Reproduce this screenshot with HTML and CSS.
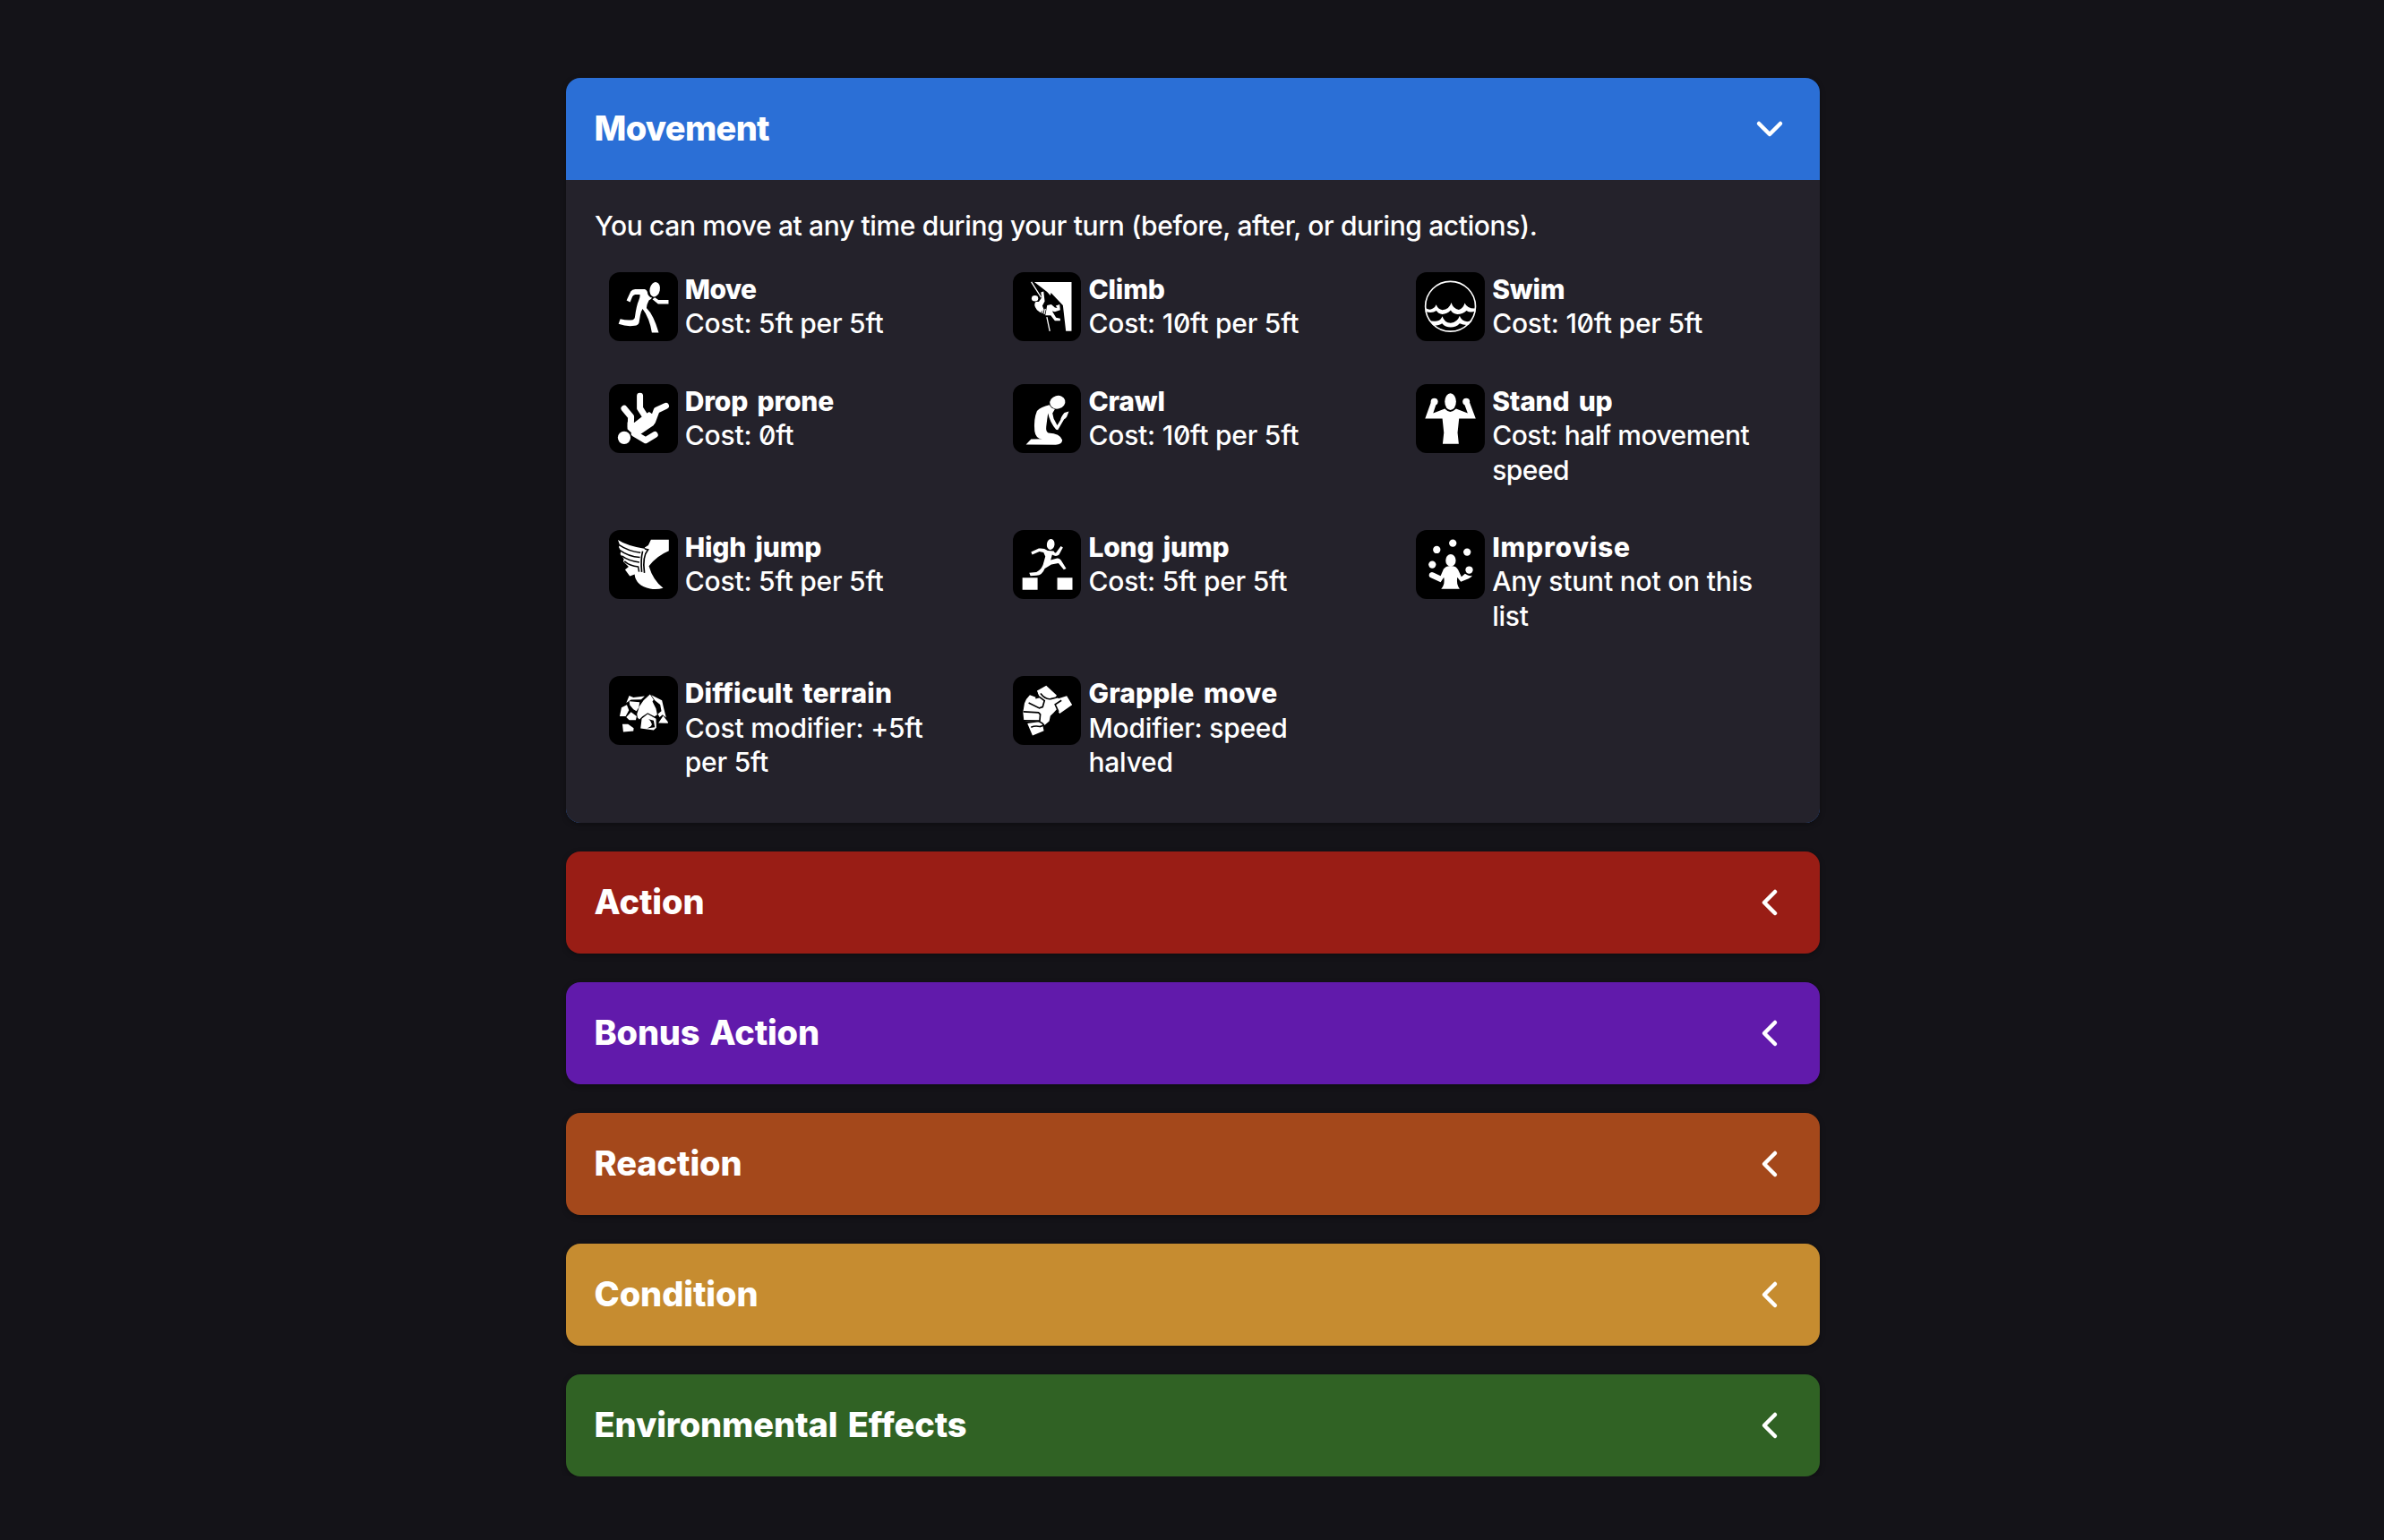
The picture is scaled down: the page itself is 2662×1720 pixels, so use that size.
FILE: index.html
```html
<!DOCTYPE html>
<html lang="en">
<head>
<meta charset="utf-8">
<title>Quick Reference</title>
<link rel="stylesheet" href="styles.css">
</head>
<body>
<main class="sections">
  <section class="card movement">
    <header class="card-head"><h2>Movement</h2><svg class="chevron" viewBox="0 0 32 32"><path d="M4 10 16 22 28 10"/></svg></header>
    <div class="panel">
      <p class="intro">You can move at any time during your turn (before, after, or during actions).</p>
      <div class="grid">
        <article class="item">
          <svg class="icon" viewBox="30 27 231 231"><ellipse cx="184" cy="85" rx="17" ry="25" transform="rotate(12 184 85)"/><path d="M89 122 103 92Q108 84 118 84L150 84Q160 88 160 100 165 112 175 113 172 118 164 122 157 135 156 147 180 170 197 230L174 230Q166 180 143 150 136 160 135 172L131 196Q128 206 116 207 90 211 62 201L68 184Q90 190 110 187 116 186 117 178 122 140 130 122 135 108 134 102L118 102Q112 103 109 108L101 128ZM184 112 196 120H230V134H195L176 118Z"/></svg>
          <div class="text"><h3 class="tight">Move</h3><p>Cost: 5ft per 5ft</p></div>
        </article>
        <article class="item">
          <svg class="icon" viewBox="31 27 231 231"><path d="M103 60H228V225H209L199 138 159 96 157 105 146 93ZM108 126Q98 136 112 154L124 163 134 150 130 140 138 125 134 92 125 95 128 112 118 126ZM146 138 160 135 172 146 180 147 175 140 188 135 190 154 172 160 163 158 176 180 190 183V190L172 190 158 172 140 172Z"/><ellipse cx="105" cy="115" rx="11" ry="10"/><path class="line" stroke-width="4" d="M93 60 126 112M134 151 129 165M140 150 136 168M145 178 155 225"/></svg>
          <div class="text"><h3>Climb</h3><p>Cost: 10ft per 5ft</p></div>
        </article>
        <article class="item">
          <svg class="icon" viewBox="33 27 231 231"><circle class="line" cx="149" cy="142" r="84" stroke-width="5"/><path d="M66 148Q80 156 90 149 98 145 101 136 108 152 122 154 145 152 152 129 158 150 177 153 192 150 197 131 206 150 232 149V158Q215 165 203 156 190 168 172 168 158 168 150 155 137 168 122 168 108 166 102 156 88 166 68 160ZM76 188Q88 194 104 191 116 190 122 175 128 196 150 198 172 196 180 174 186 192 205 193L222 190 210 204Q195 206 180 199 168 212 150 212 132 212 121 199 112 206 92 206Z"/></svg>
          <div class="text"><h3>Swim</h3><p>Cost: 10ft per 5ft</p></div>
        </article>
        <article class="item">
          <svg class="icon" viewBox="30 402 231 231"><circle cx="81" cy="582" r="21.500"/><path d="M92 530 115 531 145 508 165 495 189 512 180 540 130 574 112 572 92 553Z"/><path class="line round" stroke-width="21" d="M134 442V483L155 515M221 475 190 490 176 528M81 484 104 512 103 545M115 568 153 591 184 572"/></svg>
          <div class="text"><h3>Drop prone</h3><p>Cost: 0ft</p></div>
        </article>
        <article class="item">
          <svg class="icon" viewBox="31 402 231 231"><ellipse cx="181" cy="463" rx="26" ry="22" transform="rotate(-15 181 463)"/><path d="M154 472Q160 484 172 486L164 500 168 518 180 540 191 522Q192 512 204 498L219 494 212 512Q208 518 203 520L182 556 176 555Q155 530 149 500 146 520 143 545 141 562 150 566 190 568 197 590 196 604 175 606L75 605 92 587 132 586Q108 588 104 560 100 520 112 492 125 478 154 472Z"/></svg>
          <div class="text"><h3>Crawl</h3><p>Cost: 10ft per 5ft</p></div>
        </article>
        <article class="item">
          <svg class="icon" viewBox="33 402 231 231"><ellipse cx="149" cy="461" rx="19" ry="28.500"/><circle cx="95" cy="461" r="12"/><circle cx="202" cy="461" r="12"/><path d="M64 518 84 462 101 470 91 500 130 485Q148 505 168 485L207 500 196 470 213 462 234 518H178L173 565 177 603H123L127 565 122 518Z"/></svg>
          <div class="text"><h3>Stand up</h3><p class="tight">Cost: half movement speed</p></div>
        </article>
        <article class="item">
          <svg class="icon" viewBox="30 21 231 231"><path d="M171 53H231V91Q190 108 164 142 178 190 212 216 190 222 168 218 120 208 116 170L100 176 84 154 96 144 78 126 80 118 68 102 70 92 63 78 66 70 60 54Q90 74 152 84L150 80 162 72Z"/><path class="cut" stroke-width="4.500" d="M64 71Q95 92 136 97M67 89Q95 110 134 113M73 108Q98 126 132 129M82 126Q100 142 128 144L131 161"/><path class="cut" stroke-width="5" d="M150 84 161 87Q141 110 149 165M143 92Q136 120 140 162"/></svg>
          <div class="text"><h3>High jump</h3><p>Cost: 5ft per 5ft</p></div>
        </article>
        <article class="item">
          <svg class="icon" viewBox="31 21 231 231"><path d="M63 181H114V222H63ZM180 181H231V222H180ZM92 95 118 83Q135 81 148 90L168 92Q172 100 176 97L192 75 199 80 186 104Q176 112 163 104L158 122 180 116Q190 116 196 128L210 150 202 154 184 132 160 137Q148 145 138 150 130 172 110 174L90 175 86 165 110 162Q125 155 132 138L140 110 134 96 120 93 96 104Z"/><ellipse cx="158" cy="69" rx="13" ry="18" transform="rotate(8 158 69)"/></svg>
          <div class="text"><h3>Long jump</h3><p>Cost: 5ft per 5ft</p></div>
        </article>
        <article class="item">
          <svg class="icon" viewBox="33 21 231 231"><circle cx="157" cy="65" r="12.500"/><circle cx="103" cy="87" r="12.500"/><circle cx="205" cy="95" r="12.500"/><circle cx="88" cy="137" r="12.500"/><circle cx="212" cy="155" r="12.500"/><ellipse cx="150" cy="123" rx="17" ry="21"/><path d="M78 168Q84 160 92 164L116 175 126 152Q135 140 150 142 168 140 175 155L186 178 198 168Q212 178 222 174 221 180 210 184L184 195 172 180Q168 203 180 219H118Q132 203 127 180L116 196 80 180Q75 175 78 168Z"/></svg>
          <div class="text"><h3 class="wide">Improvise</h3><p>Any stunt not on this list</p></div>
        </article>
        <article class="item">
          <svg class="icon" viewBox="30 510 231 231"><path d="M88 600 98 576 112 582 150 578 138 589 104 590ZM98 595 133 598 130 616 122 628 112 622 100 608ZM124 638 132 612 146 592 168 572 180 590 176 596 188 620 192 640 183 646 160 634 142 646 132 656 126 650ZM172 574 208 592 214 618 222 650 210 640 200 648 194 638 206 628 202 606 184 592ZM66 645 72 616 90 607 97 625 86 645ZM88 648 104 631 123 645 120 658 98 658ZM136 686 140 654 160 638 188 654 189 684 180 692ZM196 668 212 644 228 664V669ZM78 698 75 672 94 672 113 685 112 695Z"/><path class="hole" d="M163 655 180 660 184 682 158 686Q174 680 174 672 172 660 163 655Z"/></svg>
          <div class="text"><h3 class="mid">Difficult terrain</h3><p>Cost modifier: +5ft per 5ft</p></div>
        </article>
        <article class="item">
          <svg class="icon" viewBox="31 30 231 231"><path d="M112 80 143 62 178 95 174 103 186 105 212 97 230 127 188 156 178 142 168 153 157 164 153 182 138 195 130 190 135 214 97 230 80 190 82 184 68 180 65 152 70 122 76 108 88 94 110 102 118 100Z"/><path class="cut" stroke-width="5" d="M110 83 118 101 107 104M124 89Q140 110 158 107L178 102M118 99 137 113 131 134 120 138 84 120M66 150 117 153 123 159 121 181 66 180M78 187 118 182 130 189 135 195M92 202Q106 196 122 200L133 196M194 112 173 126 184 150"/></svg>
          <div class="text"><h3 class="mid">Grapple move</h3><p>Modifier: speed halved</p></div>
        </article>
      </div>
    </div>
  </section>
  <section class="card action"><header class="card-head"><h2>Action</h2><svg class="chevron" viewBox="0 0 32 32"><path d="M22 4 10 16 22 28"/></svg></header></section>
  <section class="card bonus"><header class="card-head"><h2>Bonus Action</h2><svg class="chevron" viewBox="0 0 32 32"><path d="M22 4 10 16 22 28"/></svg></header></section>
  <section class="card reaction"><header class="card-head"><h2>Reaction</h2><svg class="chevron" viewBox="0 0 32 32"><path d="M22 4 10 16 22 28"/></svg></header></section>
  <section class="card condition"><header class="card-head"><h2>Condition</h2><svg class="chevron" viewBox="0 0 32 32"><path d="M22 4 10 16 22 28"/></svg></header></section>
  <section class="card environment"><header class="card-head"><h2>Environmental Effects</h2><svg class="chevron" viewBox="0 0 32 32"><path d="M22 4 10 16 22 28"/></svg></header></section>
</main>
</body>
</html>
```
FILE: styles.css
```css
* { box-sizing: border-box; }
body {
  margin: 0;
  background: #141318;
  color: #fff;
  font-family: Inter, "Liberation Sans", sans-serif;
  font-feature-settings: "zero";
  font-size: 30px;
  font-weight: 450;
  line-height: 38.4px;
  letter-spacing: -.22px;
}
h2, h3, p { margin: 0; }
.sections {
  width: 1400px;
  margin: 87px 0 0 632px;
  display: flex;
  flex-direction: column;
  gap: 32px;
}
.card {
  border-radius: 16px;
  overflow: hidden;
  box-shadow: 0 2px 6px rgba(0, 0, 0, .3);
}
.card-head {
  height: 114px;
  padding: 0 40px 2px 31.5px;
  display: flex;
  align-items: center;
  justify-content: space-between;
}
h2 {
  font-size: 38px;
  line-height: 48px;
  font-weight: 800;
  letter-spacing: -.1px;
  word-spacing: 3px;
}
.chevron {
  width: 32px;
  height: 32px;
  margin-top: 2px;
  fill: none;
  stroke: #fff;
  stroke-width: 4.5;
  stroke-linecap: round;
  stroke-linejoin: round;
}
.movement { background: #2b6fd6; }
.movement h2 { letter-spacing: -.7px; }
.action { background: #991d15; }
.bonus { background: #611aab; }
.bonus h2 { letter-spacing: -.2px; }
.reaction { background: #a4481b; }
.condition { background: #c68c30; }
.environment { background: #306224; }
.panel { background: #24222b; padding: 32px; height: 718px; }
.intro { margin-bottom: 16.6px; white-space: nowrap; letter-spacing: -.36px; }
.grid { display: grid; grid-template-columns: repeat(3, 1fr); gap: 16px; }
.item { padding: 16px; display: flex; align-items: flex-start; gap: 8px; }
.text { flex: 1; min-width: 0; }
.icon { width: 76.8px; height: 76.8px; flex: none; border-radius: 12px; background: #000; fill: #fff; }
.icon .line { fill: none; stroke: #fff; }
.icon .round { stroke-linecap: round; stroke-linejoin: round; }
.icon .cut { fill: none; stroke: #000; }
.icon .hole { fill: #000; }
h3 {
  font-size: 30px;
  line-height: 38.4px;
  font-weight: 800;
  letter-spacing: -.2px;
  word-spacing: 4px;
}
h3.tight { letter-spacing: -.7px; }
h3.mid { letter-spacing: .12px; }
h3.wide { letter-spacing: .8px; }
p.tight { letter-spacing: -.5px; }
```
